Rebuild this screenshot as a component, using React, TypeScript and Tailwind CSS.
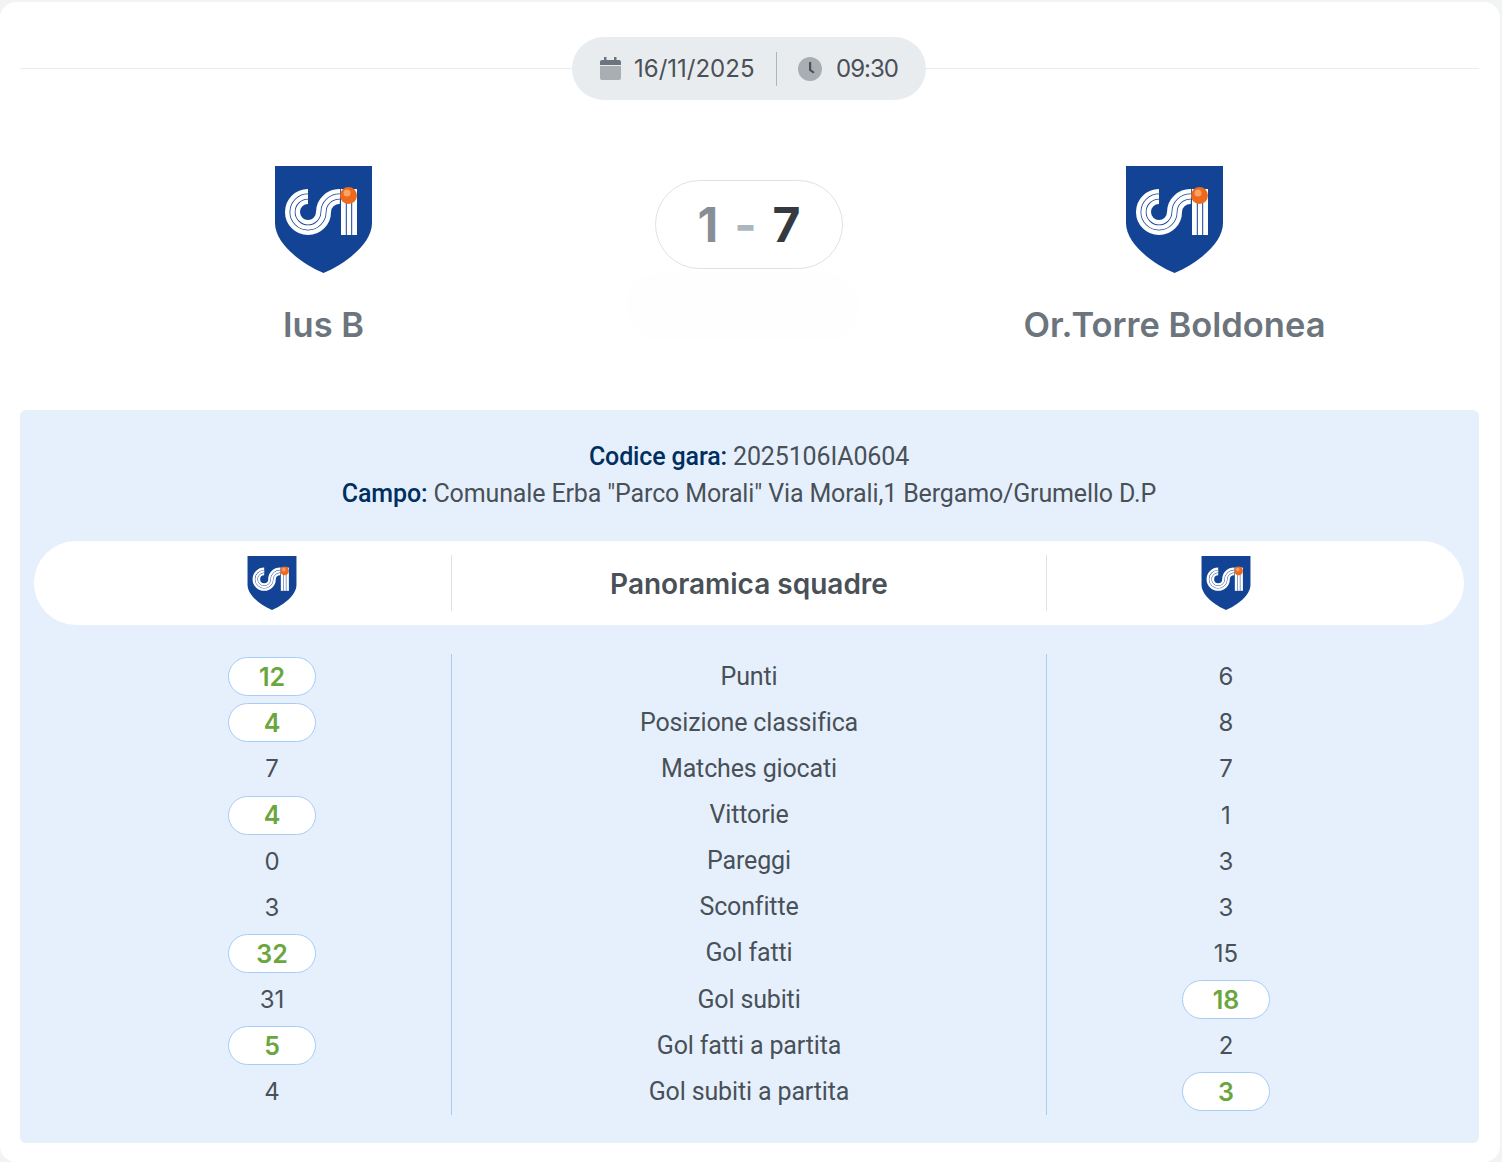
const heading = { fontFamily: "Inter, sans-serif" };

const stats = [
  { label: "Punti", home: "12", away: "6", best: "home" },
  { label: "Posizione classifica", home: "4", away: "8", best: "home" },
  { label: "Matches giocati", home: "7", away: "7", best: "" },
  { label: "Vittorie", home: "4", away: "1", best: "home" },
  { label: "Pareggi", home: "0", away: "3", best: "" },
  { label: "Sconfitte", home: "3", away: "3", best: "" },
  { label: "Gol fatti", home: "32", away: "15", best: "home" },
  { label: "Gol subiti", home: "31", away: "18", best: "away" },
  { label: "Gol fatti a partita", home: "5", away: "2", best: "home" },
  { label: "Gol subiti a partita", home: "4", away: "3", best: "away" },
];

function CsiLogo({ className }: { className: string }) {
  const s = "M33 30.5A15.5 15.5 0 1 0 48.5 46A16 15.5 0 0 1 65 30.5";
  return (
    <svg viewBox="0 0 97 107" className={className}>
      <path d="M0 0H97V57C97 78 70 98 48.5 107C27 98 0 78 0 57Z" fill="#134395" />
      <path d={s} fill="none" stroke="#fff" strokeWidth="15" />
      <path d={s} fill="none" stroke="#134395" strokeWidth="6" />
      <path d={s} fill="none" stroke="#fff" strokeWidth="4.4" />
      <path d="M66 23H82V69H66Z" fill="#fff" />
      <path d="M71.3 30V69M76.7 30V69" stroke="#134395" strokeWidth="1" />
      <circle cx="73.5" cy="29.5" r="8.5" fill="#ee6a1a" />
      <circle cx="72" cy="27" r="3.5" fill="#f8a468" />
    </svg>
  );
}

function Value({ value, best }: { value: string; best: boolean }) {
  if (best) {
    return (
      <span
        className="flex h-[39px] w-[88px] items-center justify-center rounded-[20px] border border-[#a6cdf5] bg-white pt-[2px] text-[25px] font-semibold text-[#6aa63e]"
        style={heading}
      >
        {value}
      </span>
    );
  }
  return <span className="pt-px text-[24px] text-[#495057]" style={heading}>{value}</span>;
}

export default function App() {
  return (
    <div className="h-[1162px] w-[1502px] overflow-hidden bg-[#f1f3f5] pt-[2px]" style={{ fontFamily: "Roboto, sans-serif" }}>
      <div className="h-[1160px] w-[1500px] rounded-[16px] bg-white pl-5 pr-[21px] pt-[35px]">
        <div className="flex items-center">
          <div className="h-px w-[552px] bg-[#e9ecef]" />
          <div className="flex h-[63px] w-[354px] items-center rounded-[32px] bg-[#e9ecef] pl-[28px] text-[24px] text-[#495057]" style={heading}>
            <svg viewBox="0 0 21 23" className="h-[23px] w-[21px] text-[#a9aeb3]" fill="currentColor">
              <path d="M4 0h2.5v3H14V0h2.5v3H19a2 2 0 0 1 2 2v3H0V5a2 2 0 0 1 2-2h2Z" fill="#6c757d" />
              <path d="M0 9h21v12a2 2 0 0 1-2 2H2a2 2 0 0 1-2-2Z" />
            </svg>
            <span className="ml-[13px] w-[121px] whitespace-nowrap">16/11/2025</span>
            <div className="ml-[21px] h-[34px] w-px bg-[#adb5bd]" />
            <svg viewBox="0 0 24 24" className="ml-[21px] h-6 w-6">
              <circle cx="12" cy="12" r="12" fill="#a9aeb3" />
              <path d="M11 5h2.2v7.4l3.4 2.6-1.3 1.6-4.3-3.2Z" fill="#495057" />
            </svg>
            <span className="ml-[14px] tracking-[-1px]">09:30</span>
          </div>
          <div className="h-px flex-1 bg-[#e9ecef]" />
        </div>

        <div className="mt-[66px] grid h-[244px] grid-cols-[607px_244px_607px]">
          <div className="flex flex-col items-center">
            <CsiLogo className="h-[107px] w-[97px]" />
            <div className="mt-[31px] text-[34.5px] font-semibold leading-[42px] text-[#6c757d]" style={heading}>Ius B</div>
          </div>
          <div className="flex flex-col items-center pt-[14px]">
            <div className="flex h-[89px] w-[188px] items-center justify-center gap-[16px] rounded-[45px] border border-[#dee2e6] text-[48px] font-bold" style={heading}>
              <span className="text-[#868e96]">1</span>
              <span className="text-[#adb5bd]">-</span>
              <span className="text-[#343a40]">7</span>
            </div>
            <div className="mr-[14px] mt-[4px] h-[67px] w-[233px] rounded-[34px] bg-[#fefefe]" />
          </div>
          <div className="flex flex-col items-center">
            <CsiLogo className="h-[107px] w-[97px]" />
            <div className="mt-[31px] whitespace-nowrap text-[34.5px] font-semibold leading-[42px] text-[#6c757d]" style={heading}>Or.Torre Boldonea</div>
          </div>
        </div>

        <div className="h-[733px] rounded-[6px] bg-[#e6f0fd] pl-[14px] pr-[15px] pt-[28px]">
          <div className="text-center text-[25px] leading-[37px] tracking-[-0.14px] text-[#495057]">
            <div><b className="font-medium text-[#002f5f]">Codice gara:</b> 2025106IA0604</div>
            <div><b className="font-medium text-[#002f5f]">Campo:</b> Comunale Erba "Parco Morali" Via Morali,1 Bergamo/Grumello D.P</div>
          </div>

          <div className="mt-[29px] grid h-[84px] grid-cols-[359px_1fr_359px] items-center rounded-[42px] bg-white px-[59px]">
            <div className="flex h-14 items-center justify-center border-r border-[#dee2e6]">
              <CsiLogo className="h-[54px] w-[50px]" />
            </div>
            <div className="pt-px text-center text-[28px] font-semibold text-[#495057]" style={heading}>Panoramica squadre</div>
            <div className="flex h-14 items-center justify-center border-l border-[#dee2e6]">
              <CsiLogo className="h-[54px] w-[50px]" />
            </div>
          </div>

          <div className="mt-[28.6px] grid grid-cols-[359px_1fr_359px] px-[59px]">
            <div className="flex flex-col border-r border-[#a6cdf5]">
              {stats.map((row) => (
                <div key={row.label} className="flex h-[46.13px] items-center justify-center">
                  <Value value={row.home} best={row.best === "home"} />
                </div>
              ))}
            </div>
            <div className="flex flex-col">
              {stats.map((row) => (
                <div key={row.label} className="flex h-[46.13px] items-center justify-center pb-[0.4px] text-[25px] tracking-[-0.14px] text-[#495057]">
                  {row.label}
                </div>
              ))}
            </div>
            <div className="flex flex-col border-l border-[#a6cdf5]">
              {stats.map((row) => (
                <div key={row.label} className="flex h-[46.13px] items-center justify-center">
                  <Value value={row.away} best={row.best === "away"} />
                </div>
              ))}
            </div>
          </div>
        </div>
      </div>
    </div>
  );
}
